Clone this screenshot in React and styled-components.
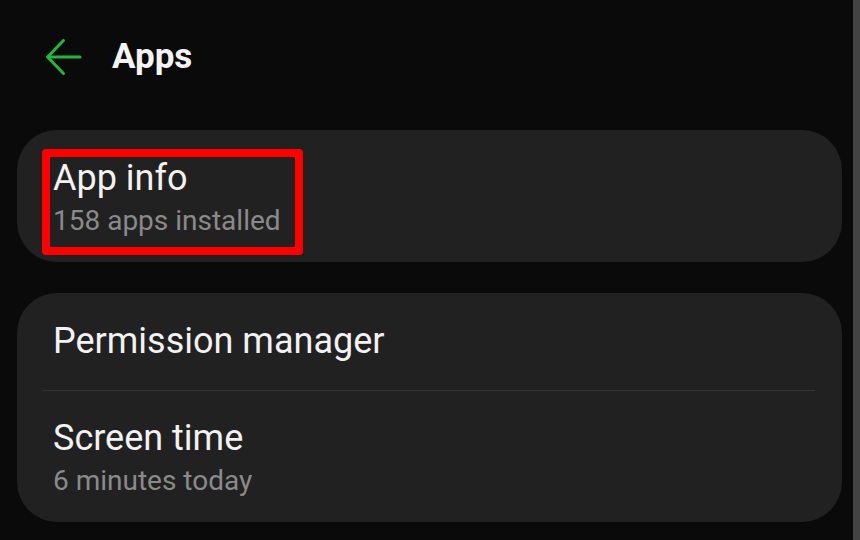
import React from 'react'
import styled, { createGlobalStyle } from 'styled-components'

const GlobalStyle = createGlobalStyle`
  html, body {
    margin: 0;
    background: #0a0a0a;
    font-family: Roboto, "Liberation Sans", sans-serif;
  }
`

const Screen = styled.div`
  display: flex;
  width: 860px;
  height: 540px;
  overflow: hidden;
  background: #0a0a0a;
`

const Main = styled.div`
  flex: 1;
  display: flex;
  flex-direction: column;
  padding: 0 11px 0 17px;
`

const ScrollStrip = styled.div`
  width: 7px;
  background: #434343;
`

const Header = styled.div`
  flex-shrink: 0;
  height: 130px;
  display: flex;
  align-items: center;
  gap: 29px;
  padding: 0 0 16px 28px;
  box-sizing: border-box;
`

const BackButton = styled.div`
  width: 38px;
  height: 38px;
  display: flex;
  align-items: center;
  justify-content: center;
`

const Title = styled.h1`
  margin: 0;
  font-size: 35px;
  line-height: 1.2;
  font-weight: 700;
  color: #f4f4f4;
`

const CardList = styled.div`
  display: flex;
  flex-direction: column;
  gap: 31px;
`

const Card = styled.div`
  flex-shrink: 0;
  position: relative;
  background: #212121;
  border-radius: 40px;
  overflow: hidden;
`

const Row = styled.div`
  display: flex;
  flex-direction: column;
  gap: 4px;
  padding: ${p => (p.$top || 27)}px 36px ${p => (p.$sub ? 24 : 27)}px;
`

const Divider = styled.div`
  height: 1px;
  margin: 0 27px 0 26px;
  background: #343434;
`

const RowTitle = styled.div`
  font-size: 36px;
  line-height: 1.2;
  color: #f2f2f2;
`

const RowSub = styled.div`
  font-size: 28px;
  line-height: 1.2;
  color: #8a8a8a;
`

const Highlight = styled.div`
  position: absolute;
  left: 25px;
  top: 19px;
  width: 261px;
  height: 106px;
  box-sizing: border-box;
  border: 8px solid #ff0000;
  border-radius: 4px;
  pointer-events: none;
`

const BackArrow = () => (
  <svg width="38" height="38" viewBox="0 0 38 38" fill="none">
    <path
      d="M35 19H3M18.5 2.5L2.5 19l16 16.5"
      stroke="#1fb83a"
      strokeWidth="3"
      strokeLinecap="round"
      strokeLinejoin="round"
    />
  </svg>
)

const App = () => (
  <Screen>
    <GlobalStyle />
    <Main>
      <Header>
        <BackButton>
          <BackArrow />
        </BackButton>
        <Title>Apps</Title>
      </Header>
      <CardList>
        <Card>
          <Row $sub>
            <RowTitle>App info</RowTitle>
            <RowSub>158 apps installed</RowSub>
          </Row>
          <Highlight />
        </Card>
        <Card>
          <Row>
            <RowTitle>Permission manager</RowTitle>
          </Row>
          <Divider />
          <Row $sub $top={26}>
            <RowTitle>Screen time</RowTitle>
            <RowSub>6 minutes today</RowSub>
          </Row>
        </Card>
      </CardList>
    </Main>
    <ScrollStrip />
  </Screen>
)

export default App
